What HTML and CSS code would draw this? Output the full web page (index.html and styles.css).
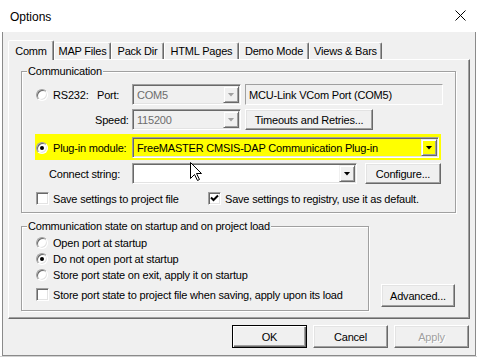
FILE: index.html
```html
<!DOCTYPE html>
<html lang="en">
<head>
  <meta charset="UTF-8" />
  <title>Options</title>
  <link rel="stylesheet" href="styles.css">
</head>
<body>
  <div class="window">
    <div class="titlebar">
      <span>Options</span>
      <svg class="close" width="11" height="11" viewBox="0 0 11 11">
        <path d="M0.5 0.5 L10.5 10.5 M10.5 0.5 L0.5 10.5" stroke="#000" stroke-width="1" fill="none"/>
      </svg>
    </div>

    <div class="client">
      <!-- tab strip -->
      <div class="tabs">
        <div class="tab active w-comm">Comm</div>
        <div class="tab w-map">MAP Files</div>
        <div class="tab w-pack">Pack Dir</div>
        <div class="tab w-html">HTML Pages</div>
        <div class="tab w-demo">Demo Mode</div>
        <div class="tab w-views">Views &amp; Bars</div>
      </div>

      <div class="panel">
        <div class="group group-comm">
          <span class="group-title">Communication</span>

          <div class="row first">
            <span class="radio lead"></span>
            <span class="lbl w-rs">RS232:</span>
            <span class="lbl w-port">Port:</span>
            <div class="combo disabled w-combo">
              <span class="combo-text">COM5</span>
              <span class="drop"></span>
            </div>
            <div class="edit">MCU-Link VCom Port (COM5)</div>
          </div>

          <div class="row">
            <span class="lbl w-speed">Speed:</span>
            <div class="combo disabled w-combo">
              <span class="combo-text">115200</span>
              <span class="drop"></span>
            </div>
            <div class="btn w-timeouts">Timeouts and Retries...</div>
          </div>

          <div class="highlight">
            <span class="radio on"></span>
            <span class="lbl w-plugin">Plug-in module:</span>
            <div class="combo yellow w-plugcombo">
              <span class="combo-text">FreeMASTER CMSIS-DAP Communication Plug-in</span>
              <span class="drop"></span>
            </div>
          </div>

          <div class="row connect">
            <span class="lbl w-connect">Connect string:</span>
            <div class="combo w-connectcombo">
              <span class="combo-text"></span>
              <span class="drop"></span>
            </div>
            <div class="btn w-configure">Configure...</div>
          </div>

          <div class="checks">
            <label class="check-item w-firstcheck">
              <span class="checkbox"></span>
              <span>Save settings to project file</span>
            </label>
            <label class="check-item">
              <span class="checkbox">
                <svg width="9" height="9" viewBox="0 0 9 9">
                  <path d="M1 3.5 L3.5 6 L8 1.5" stroke="#000" stroke-width="2" fill="none"/>
                </svg>
              </span>
              <span>Save settings to registry, use it as default.</span>
            </label>
          </div>
        </div>

        <div class="lower">
          <div class="group group-state">
            <span class="group-title">Communication state on startup and on project load</span>
            <div class="opt first-opt"><span class="radio"></span><span>Open port at startup</span></div>
            <div class="opt"><span class="radio on"></span><span>Do not open port at startup</span></div>
            <div class="opt"><span class="radio"></span><span>Store port state on exit, apply it on startup</span></div>
            <div class="opt opt-check"><span class="checkbox"></span><span>Store port state to project file when saving, apply upon its load</span></div>
          </div>
          <div class="btn w-advanced">Advanced...</div>
        </div>
      </div>

      <div class="actions">
        <div class="btn dialog default">OK</div>
        <div class="btn dialog">Cancel</div>
        <div class="btn dialog off">Apply</div>
      </div>
    </div>
  </div>

  <!-- mouse pointer -->
  <svg class="pointer" width="13" height="20" viewBox="0 0 13 20">
    <path d="M0.5 0.5 L0.5 16.5 L4.5 12.5 L7.5 18.5 L9.5 17.5 L6.5 11.5 L11.5 11.5 Z" fill="#fff" stroke="#000" stroke-width="1"/>
  </svg>
</body>
</html>
```

FILE: styles.css
```css
* {
  margin: 0;
  padding: 0;
  box-sizing: border-box;
}

body {
  position: relative;
  background: #d2d2d2;
  font-family: "Liberation Sans", Arial, sans-serif;
  font-size: 11px;
  letter-spacing: -0.2px;
  color: #000;
  overflow: hidden;
}

.window {
  width: 477px;
  height: 356px;
  background: #fff;
  display: flex;
  flex-direction: column;
}

.titlebar {
  height: 32px;
  flex: none;
  display: flex;
  align-items: center;
  justify-content: space-between;
  padding: 2px 11px 0 10px;
  font-size: 12px;
  letter-spacing: 0;
}

.close {
  margin-top: -3px;
}

.client {
  flex: 1;
  margin: 0 1px 0 2px;
  border: 1px solid #8a8a8a;
  border-top: none;
  background: #f0f0f0;
  padding: 8px 5px 0;
}

/* tabs */
.tabs {
  display: flex;
  align-items: flex-end;
  height: 19px;
}

.tab {
  height: 17px;
  display: flex;
  align-items: center;
  justify-content: center;
  border: 1px solid;
  border-bottom: none;
  border-color: #fff #696969 transparent #fff;
  border-radius: 2px 2px 0 0;
  box-shadow: inset -1px 0 #a0a0a0;
  background: #f0f0f0;
}

.tab.active {
  height: 20px;
  margin-bottom: -1px;
  position: relative;
  z-index: 1;
}

.w-comm { width: 46px; }
.w-map { width: 57px; }
.w-pack { width: 53px; }
.w-html { width: 75px; }
.w-demo { width: 70px; }
.w-views { width: 73px; }

.panel {
  width: 462px;
  height: 260px;
  border: 1px solid;
  border-color: #fff #696969 #696969 #fff;
  box-shadow: inset -1px -1px #a0a0a0;
  padding: 11px 0 0 12px;
}

/* group boxes */
.group {
  border: 1px solid #a0a0a0;
  box-shadow: inset 1px 1px #fff, 1px 1px #fff;
}

.group-title {
  display: block;
  width: fit-content;
  margin: -7px 0 0 5px;
  padding: 0 1px;
  line-height: 13px;
  background: #f0f0f0;
}

.group-comm {
  width: 435px;
  padding-bottom: 7px;
}

.row {
  display: flex;
  align-items: center;
  height: 21px;
  margin-top: 4px;
}

.row.first { margin-top: 6px; }
.row.connect { margin-top: 3px; }

.lbl { flex: none; white-space: nowrap; }
.lead { margin-left: 14px; }
.w-rs { width: 44px; margin-left: 5px; }
.w-port { width: 35px; }
.w-speed { width: 37px; margin-left: 73px; }
.w-plugin { width: 79px; margin-left: 5px; }
.w-connect { width: 83px; margin-left: 27px; }

/* controls */
.radio {
  flex: none;
  width: 12px;
  height: 12px;
  border-radius: 50%;
  border: 1px solid;
  border-color: #a0a0a0 #fff #fff #a0a0a0;
  box-shadow: inset 1px 1px #696969, inset -1px -1px #e3e3e3;
  background: #fff;
  display: flex;
  align-items: center;
  justify-content: center;
}

.radio.on::after {
  content: "";
  width: 4px;
  height: 4px;
  border-radius: 50%;
  background: #000;
}

.checkbox {
  flex: none;
  width: 13px;
  height: 13px;
  border: 1px solid;
  border-color: #a0a0a0 #fff #fff #a0a0a0;
  box-shadow: inset 1px 1px #696969, inset -1px -1px #e3e3e3;
  background: #fff;
  display: flex;
  align-items: center;
  justify-content: center;
}

.combo {
  flex: none;
  height: 21px;
  display: flex;
  align-items: center;
  padding: 1px;
  border: 1px solid;
  border-color: #a0a0a0 #fff #fff #a0a0a0;
  box-shadow: inset 1px 1px #696969, inset -1px -1px #e3e3e3;
  background: #fff;
}

.combo-text {
  flex: 1;
  padding-left: 3px;
  white-space: nowrap;
  overflow: hidden;
}

.combo.disabled {
  background: #f0f0f0;
  color: #6d6d6d;
}

.combo.yellow {
  background: #ffff00;
}

.drop {
  flex: none;
  width: 16px;
  height: 17px;
  border: 1px solid;
  border-color: #f0f0f0 #696969 #696969 #f0f0f0;
  box-shadow: inset 1px 1px #fff, inset -1px -1px #a0a0a0;
  background: #f0f0f0;
  display: flex;
  align-items: center;
  justify-content: center;
}

.drop::after {
  content: "";
  width: 7px;
  height: 4px;
  background: #000;
  clip-path: polygon(0 0, 100% 0, 50% 100%);
}

.combo.disabled .drop::after {
  background: #a0a0a0;
}

.combo.yellow .drop {
  background: #ffff00;
}

.w-combo { width: 109px; }
.w-plugcombo { width: 307px; }
.w-connectcombo { width: 225px; }

.edit {
  width: 198px;
  height: 21px;
  margin-left: 4px;
  display: flex;
  align-items: center;
  padding-left: 3px;
  border: 1px solid;
  border-color: #a0a0a0 #fff #fff #a0a0a0;
  background: #f0f0f0;
  white-space: nowrap;
}

.btn {
  flex: none;
  display: flex;
  align-items: center;
  justify-content: center;
  height: 21px;
  border: 1px solid;
  border-color: #fff #696969 #696969 #fff;
  box-shadow: inset -1px -1px #a0a0a0, inset 1px 1px #e3e3e3;
  background: #f0f0f0;
  white-space: nowrap;
}

.w-timeouts { width: 128px; margin-left: 4px; }
.w-configure { width: 76px; margin-left: 8px; }

.highlight {
  display: flex;
  align-items: center;
  width: 406px;
  height: 26px;
  margin: 4px 0 0 13px;
  padding: 3px 0 2px 1px;
  background: #ffff00;
}

.checks {
  display: flex;
  align-items: center;
  height: 13px;
  margin-top: 8px;
}

.check-item {
  display: flex;
  align-items: center;
  gap: 4px;
  white-space: nowrap;
}

.w-firstcheck {
  width: 172px;
  margin-left: 14px;
}

/* lower part */
.lower {
  display: flex;
  align-items: flex-end;
  margin-top: 13px;
}

.group-state {
  width: 348px;
  padding-bottom: 8px;
}

.opt {
  display: flex;
  align-items: center;
  gap: 5px;
  height: 16px;
  padding-left: 14px;
  white-space: nowrap;
}

.opt.first-opt { margin-top: 2px; }

.opt.opt-check {
  height: 15px;
  margin-top: 4px;
  gap: 4px;
}

.w-advanced {
  width: 74px;
  height: 23px;
  margin: 0 0 4px 12px;
}

/* dialog buttons */
.actions {
  display: flex;
  justify-content: flex-end;
  gap: 6px;
  margin-top: 6px;
  padding-right: 1px;
}

.btn.dialog {
  width: 75px;
  height: 23px;
}

.btn.default {
  border: 1px solid #000;
  box-shadow: inset 1px 1px #fff, inset -1px -1px #696969, inset -2px -2px #a0a0a0;
}

.btn.off {
  color: #a0a0a0;
  text-shadow: 1px 1px #fff;
}

.pointer {
  position: absolute;
  left: 190px;
  top: 162px;
}
```
